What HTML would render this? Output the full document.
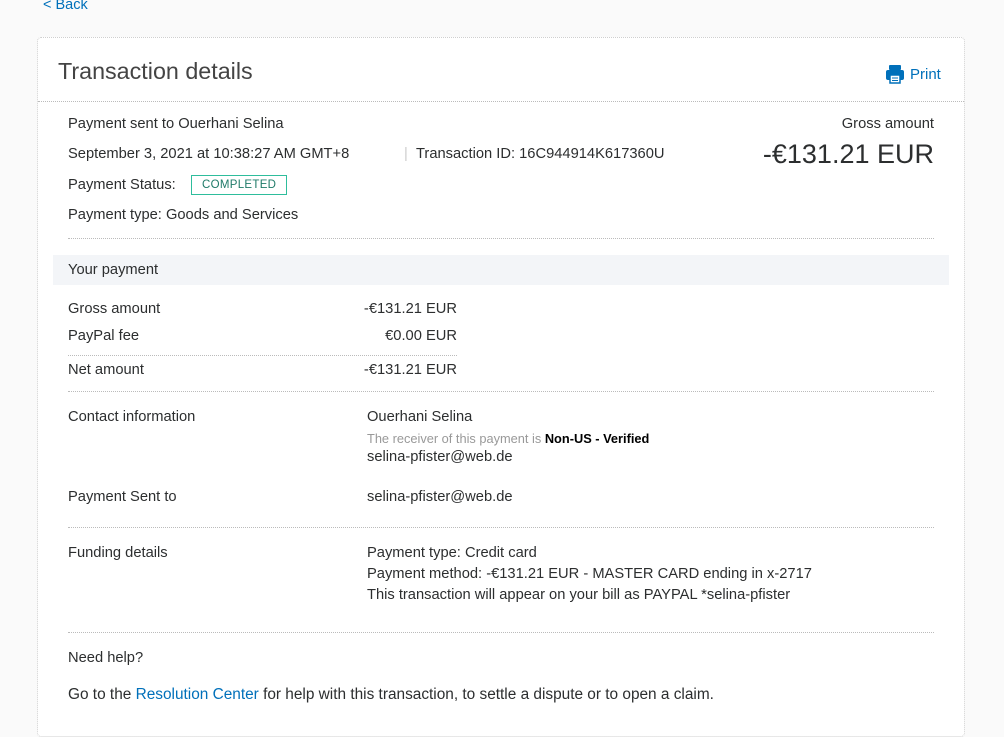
<!DOCTYPE html>
<html><head><meta charset="utf-8"><style>
*{margin:0;padding:0;box-sizing:border-box}
body{width:1004px;height:718px;background:#fafafa;font-family:"Liberation Sans",sans-serif;color:#2c2e2f;font-size:14.7px;position:relative;overflow:hidden}
.a{position:absolute;white-space:nowrap}
.card{position:absolute;left:37px;top:37px;width:928px;height:700px;background:#fff;border:1px dotted #cfcfcf;border-radius:4px}
.hr{position:absolute;border-top:1px dotted #bbb;height:0}
.blue{color:#0070ba}
</style></head><body>
<div class="a blue" style="left:43px;top:-3px;font-size:14.5px">&lt; Back</div>
<div class="card"></div>
<div class="a" style="left:58px;top:58px;font-size:23.3px;font-weight:300;color:#444">Transaction details</div>
<div class="a blue" style="left:885px;top:64px;font-size:15px;display:flex;align-items:center;gap:5px">
<svg width="20" height="20" viewBox="0 0 20 20"><rect x="4" y="1" width="12" height="5" rx="1" fill="#0070ba"/><rect x="1" y="6" width="18" height="10" rx="2" fill="#0070ba"/><rect x="5" y="11" width="10" height="8" fill="#fff" stroke="#0070ba" stroke-width="1.5"/><line x1="7" y1="14" x2="13" y2="14" stroke="#0070ba"/><line x1="7" y1="16.5" x2="13" y2="16.5" stroke="#0070ba"/></svg>Print</div>
<div class="hr" style="left:38px;width:926px;top:101px"></div>
<div class="a" style="left:68px;top:116px">Payment sent to Ouerhani Selina</div>
<div class="a" style="left:68px;top:146px">September 3, 2021 at 10:38:27 AM GMT+8</div>
<div class="a" style="left:404px;top:146px;color:#ccc">|</div>
<div class="a" style="left:416px;top:146px">Transaction ID: 16C944914K617360U</div>
<div class="a" style="left:68px;top:177px">Payment Status:</div>
<div class="a" style="left:191px;top:175px;border:1px solid #2ebd9c;color:#1f7a68;font-size:11.5px;padding:3px 10px;letter-spacing:.3px">COMPLETED</div>
<div class="a" style="left:68px;top:207px">Payment type: Goods and Services</div>
<div class="a" style="right:70px;top:116px">Gross amount</div>
<div class="a" style="right:70px;top:139px;font-size:27px">-€131.21 EUR</div>
<div class="hr" style="left:68px;width:866px;top:238px"></div>
<div class="a" style="left:53px;top:255px;width:896px;height:30px;background:#f3f5f8"></div>
<div class="a" style="left:68px;top:262px">Your payment</div>
<div class="a" style="left:68px;top:301px">Gross amount</div>
<div class="a" style="right:547px;top:301px">-€131.21 EUR</div>
<div class="a" style="left:68px;top:328px">PayPal fee</div>
<div class="a" style="right:547px;top:328px">€0.00 EUR</div>
<div class="hr" style="left:68px;width:389px;top:355px"></div>
<div class="a" style="left:68px;top:362px">Net amount</div>
<div class="a" style="right:547px;top:362px">-€131.21 EUR</div>
<div class="hr" style="left:68px;width:866px;top:391px"></div>
<div class="a" style="left:68px;top:409px">Contact information</div>
<div class="a" style="left:367px;top:409px">Ouerhani Selina</div>
<div class="a" style="left:367px;top:431px;font-size:12.8px;color:#999">The receiver of this payment is <b style="color:#000">Non-US - Verified</b></div>
<div class="a" style="left:367px;top:449px">selina-pfister@web.de</div>
<div class="a" style="left:68px;top:489px">Payment Sent to</div>
<div class="a" style="left:367px;top:489px">selina-pfister@web.de</div>
<div class="hr" style="left:68px;width:866px;top:527px"></div>
<div class="a" style="left:68px;top:545px">Funding details</div>
<div class="a" style="left:367px;top:545px">Payment type: Credit card</div>
<div class="a" style="left:367px;top:566px">Payment method: -€131.21 EUR - MASTER CARD ending in x-2717</div>
<div class="a" style="left:367px;top:587px">This transaction will appear on your bill as PAYPAL *selina-pfister</div>
<div class="hr" style="left:68px;width:866px;top:632px"></div>
<div class="a" style="left:68px;top:650px">Need help?</div>
<div class="a" style="left:68px;top:686px;font-size:15.4px">Go to the <span class="blue">Resolution Center</span> for help with this transaction, to settle a dispute or to open a claim.</div>
</body></html>
